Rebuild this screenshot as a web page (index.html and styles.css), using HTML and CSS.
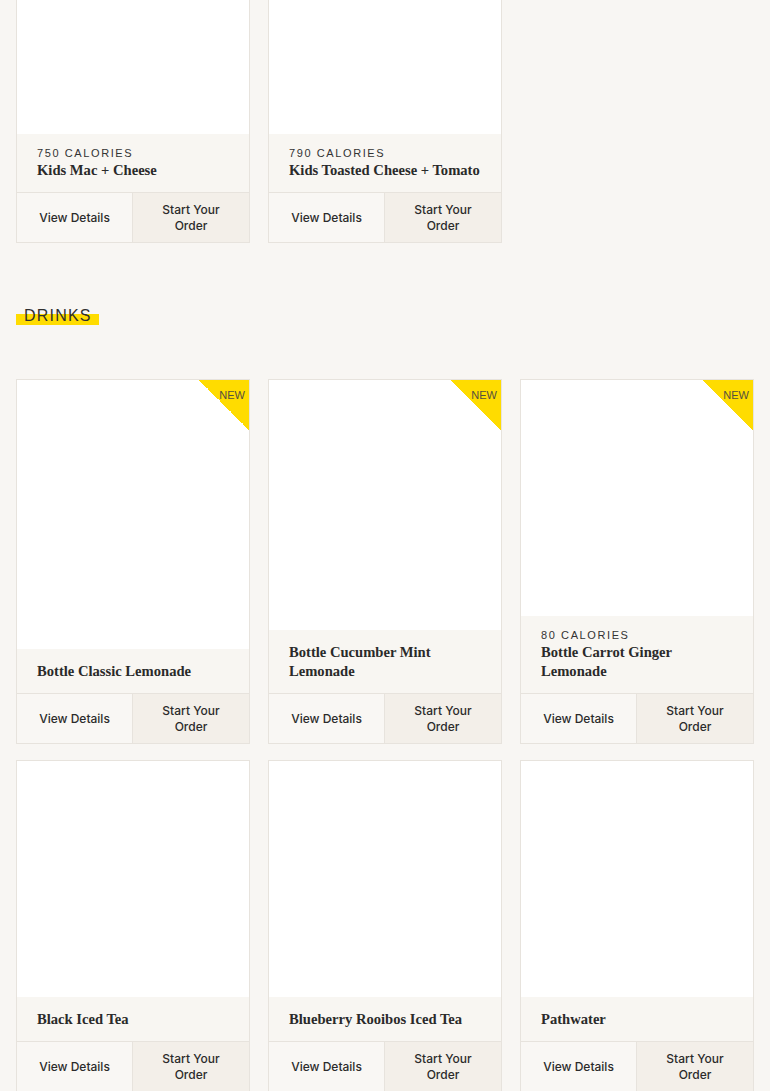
FILE: index.html
```html
<!DOCTYPE html>
<html lang="en">
<head>
    <meta charset="UTF-8">
    <meta name="viewport" content="width=device-width, initial-scale=1.0">
    <title>Menu - Kids and Drinks</title>
    <link rel="stylesheet" href="styles.css">
</head>
<body>
    <section class="menu-section menu-section--top">
        <div class="card-grid">
            <div class="card">
                <div class="card-img"></div>
                <div class="card-info">
                    <p class="calories">750 Calories</p>
                    <h3 class="card-title">Kids Mac + Cheese</h3>
                </div>
                <div class="card-actions">
                    <button class="btn-details">View Details</button>
                    <button class="btn-order">Start Your Order</button>
                </div>
            </div>
            <div class="card">
                <div class="card-img"></div>
                <div class="card-info">
                    <p class="calories">790 Calories</p>
                    <h3 class="card-title">Kids Toasted Cheese + Tomato</h3>
                </div>
                <div class="card-actions">
                    <button class="btn-details">View Details</button>
                    <button class="btn-order">Start Your Order</button>
                </div>
            </div>
        </div>
    </section>

    <section class="menu-section">
        <h2 class="section-title"><span>Drinks</span></h2>
        <div class="card-grid">
            <div class="card">
                <div class="card-img"><span class="badge-new">NEW</span></div>
                <div class="card-info">
                    <h3 class="card-title">Bottle Classic Lemonade</h3>
                </div>
                <div class="card-actions">
                    <button class="btn-details">View Details</button>
                    <button class="btn-order">Start Your Order</button>
                </div>
            </div>
            <div class="card">
                <div class="card-img"><span class="badge-new">NEW</span></div>
                <div class="card-info">
                    <h3 class="card-title">Bottle Cucumber Mint Lemonade</h3>
                </div>
                <div class="card-actions">
                    <button class="btn-details">View Details</button>
                    <button class="btn-order">Start Your Order</button>
                </div>
            </div>
            <div class="card">
                <div class="card-img"><span class="badge-new">NEW</span></div>
                <div class="card-info">
                    <p class="calories">80 Calories</p>
                    <h3 class="card-title">Bottle Carrot Ginger Lemonade</h3>
                </div>
                <div class="card-actions">
                    <button class="btn-details">View Details</button>
                    <button class="btn-order">Start Your Order</button>
                </div>
            </div>
            <div class="card">
                <div class="card-img"></div>
                <div class="card-info">
                    <h3 class="card-title">Black Iced Tea</h3>
                </div>
                <div class="card-actions">
                    <button class="btn-details">View Details</button>
                    <button class="btn-order">Start Your Order</button>
                </div>
            </div>
            <div class="card">
                <div class="card-img"></div>
                <div class="card-info">
                    <h3 class="card-title">Blueberry Rooibos Iced Tea</h3>
                </div>
                <div class="card-actions">
                    <button class="btn-details">View Details</button>
                    <button class="btn-order">Start Your Order</button>
                </div>
            </div>
            <div class="card">
                <div class="card-img"></div>
                <div class="card-info">
                    <h3 class="card-title">Pathwater</h3>
                </div>
                <div class="card-actions">
                    <button class="btn-details">View Details</button>
                    <button class="btn-order">Start Your Order</button>
                </div>
            </div>
        </div>
    </section>
</body>
</html>
```

FILE: styles.css
```css
body {
    margin: 0;
    padding: 0;
    background: #f8f6f3;
    color: #2b2b2b;
    font-family: "Liberation Sans", Arial, sans-serif;
    overflow: hidden;
}

/* Sections */
.menu-section {
    padding: 0 16px;
}

/* first row is scrolled partly out of view */
.menu-section--top {
    margin-top: -103px;
}

.section-title {
    margin: 63px 0 53px;
    font-size: 16px;
    font-weight: 400;
    letter-spacing: 1.2px;
    text-transform: uppercase;
    line-height: 20px;
    color: #2f2f2f;
}

.section-title span {
    display: inline-block;
    padding: 0 7px 0 8px;
    background: linear-gradient(to bottom, transparent 42%, #ffdc00 42%);
    line-height: 19px;
}

/* Cards */
.card-grid {
    display: grid;
    grid-template-columns: repeat(3, 1fr);
    column-gap: 18px;
    row-gap: 16px;
}

.card {
    display: flex;
    flex-direction: column;
    border: 1px solid #e7e3dd;
    background: #f8f6f2;
}

.card-img {
    position: relative;
    flex: 1;
    min-height: 236px;
    background: #ffffff;
}

.badge-new {
    position: absolute;
    top: 0;
    right: 0;
    width: 50px;
    height: 50px;
    background: linear-gradient(to top right, transparent 50%, #ffdc00 50%);
    color: #55503f;
    font-size: 11px;
    text-align: right;
    padding: 9px 4px 0 0;
    box-sizing: border-box;
    line-height: 12px;
}

.card-info {
    padding: 13px 20px 12px;
}

.calories {
    margin: 0 0 1px;
    font-size: 11px;
    letter-spacing: 1.6px;
    line-height: 12px;
    text-transform: uppercase;
    color: #333;
}

.card-title {
    margin: 0;
    font-family: "Liberation Serif", "Times New Roman", serif;
    font-size: 14.6px;
    font-weight: 700;
    line-height: 19px;
    color: #2a2a2a;
}

.calories + .card-title {
    margin-top: 2px;
}

.card-actions {
    display: grid;
    grid-template-columns: 1fr 1fr;
    border-top: 1px solid #e7e3dd;
    height: 49px;
}

.card-actions button {
    border: none;
    margin: 0;
    padding: 0 22px;
    font-family: Inter, "Liberation Sans", Arial, sans-serif;
    font-size: 12px;
    font-weight: 500;
    line-height: 16px;
    color: #2b2b2b;
    cursor: pointer;
}

.btn-details {
    background: #f9f7f4;
    border-right: 1px solid #e7e3dd !important;
}

.btn-order {
    background: #f3efe9;
}
```
